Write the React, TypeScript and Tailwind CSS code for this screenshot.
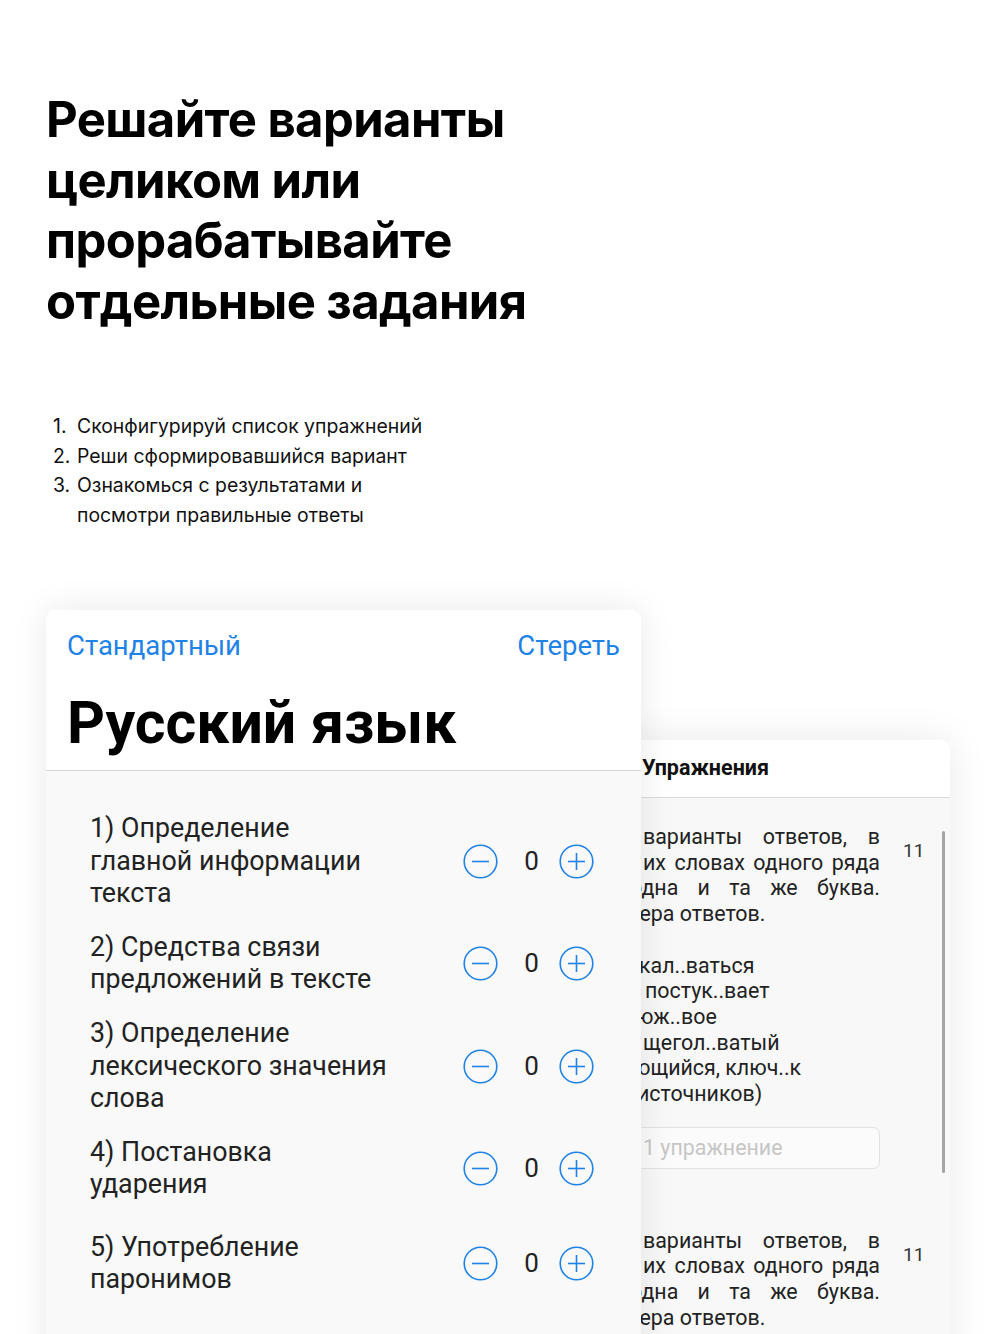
import React from "react";

function MinusIcon() {
  return (
    <svg width="35" height="35" viewBox="0 0 35 35" fill="none">
      <circle cx="17.5" cy="17.5" r="16.3" stroke="#1f82e6" strokeWidth="1.6" />
      <line x1="9" y1="17.5" x2="26" y2="17.5" stroke="#1f82e6" strokeWidth="1.6" />
    </svg>
  );
}

function PlusIcon() {
  return (
    <svg width="35" height="35" viewBox="0 0 35 35" fill="none">
      <circle cx="17.5" cy="17.5" r="16.3" stroke="#1f82e6" strokeWidth="1.6" />
      <line x1="9" y1="17.5" x2="26" y2="17.5" stroke="#1f82e6" strokeWidth="1.6" />
      <line x1="17.5" y1="9" x2="17.5" y2="26" stroke="#1f82e6" strokeWidth="1.6" />
    </svg>
  );
}

type Row = { lines: string[]; h: string };

const rows: Row[] = [
  { lines: ["1) Определение", "главной информации", "текста"], h: "h-[100px]" },
  { lines: ["2) Средства связи", "предложений в тексте"], h: "h-[104px]" },
  { lines: ["3) Определение", "лексического значения", "слова"], h: "h-[102px]" },
  { lines: ["4) Постановка", "ударения"], h: "h-[102px]" },
  { lines: ["5) Употребление", "паронимов"], h: "h-[88px]" },
];

function Justified({ words, cls }: { words: string[]; cls: string }) {
  return (
    <div className={"flex justify-between whitespace-nowrap " + cls}>
      {words.map((w, i) => (
        <span key={i}>{w}</span>
      ))}
    </div>
  );
}

function TaskText() {
  return (
    <div className="w-[250px]">
      <Justified words={["варианты", "ответов,", "в"]} cls="ml-[13px]" />
      <Justified words={["их", "словах", "одного", "ряда"]} cls="ml-[13px]" />
      <Justified words={["одна", "и", "та", "же", "буква."]} cls="ml-[0px]" />
      <div className="whitespace-nowrap ml-[-31px]">номера ответов.</div>
    </div>
  );
}

export default function App() {
  return (
    <div className="w-[1000px] h-[1334px] overflow-hidden bg-white font-[Inter] text-black">
      <h1 className="pl-[46px] pt-[90px] text-[49px] leading-[60.5px] font-bold tracking-[-0.6px]">
        Решайте варианты
        <br />
        целиком или
        <br />
        прорабатывайте
        <br />
        отдельные задания
      </h1>

      <ol className="mt-[80px] pl-[53px] text-[19.4px] leading-[29.5px] text-[#111] tracking-[0px]">
        <li className="flex">
          <span className="w-[24px]">1.</span>
          <span>Сконфигурируй список упражнений</span>
        </li>
        <li className="flex">
          <span className="w-[24px]">2.</span>
          <span>Реши сформировавшийся вариант</span>
        </li>
        <li className="flex">
          <span className="w-[24px]">3.</span>
          <span>
            Ознакомься с результатами и
            <br />
            посмотри правильные ответы
          </span>
        </li>
      </ol>

      <div className="relative mt-[80px] h-[725px]">
        {/* Right panel (behind) */}
        <div className="absolute left-[560px] top-[130px] w-[390px] h-[620px] z-0 rounded-tr-[10px] shadow-[0_0_40px_rgba(0,0,0,0.09)] font-[Roboto]">
          <div className="h-[58px] bg-white rounded-tr-[10px] border-b border-[#dadada] flex items-center pl-[82px]">
            <span className="text-[21.5px] font-bold text-[#111]">Упражнения</span>
          </div>
          <div className="relative bg-[#f8f8f8] h-[562px] text-[21.4px] leading-[25.7px] text-[#222]">
            <div className="flex">
              <div className="pl-[70px] pt-[26px] w-[320px]">
                <TaskText />
                <div className="h-[25.7px]" />
                <div className="whitespace-nowrap ml-[9px]">кал..ваться</div>
                <div className="whitespace-nowrap ml-[15px]">постук..вает</div>
                <div className="whitespace-nowrap ml-[6px]">юж..вое</div>
                <div className="whitespace-nowrap ml-[13px]">щегол..ватый</div>
                <div className="whitespace-nowrap ml-[3px]">ющийся, ключ..к</div>
                <div className="whitespace-nowrap ml-[7px]">источников)</div>
                <div className="mt-[20px] ml-[-30px] w-[280px] h-[42px] rounded-[7px] border border-[#e3e3e3] bg-[#fbfbfb] flex items-center pl-[42px] text-[#c6c6c6]">
                  1 упражнение
                </div>
              </div>
              <div className="pt-[40px] pl-[23px] text-[19px] text-[#333]">11</div>
            </div>
            <div className="flex mt-[59px]">
              <div className="pl-[70px] w-[320px]">
                <TaskText />
              </div>
              <div className="pt-[14px] pl-[23px] text-[19px] text-[#333]">11</div>
            </div>
            <div className="absolute left-[382px] top-[33px] w-[3px] h-[342px] rounded-full bg-[#a5a5a5]" />
          </div>
        </div>

        {/* Left card */}
        <div className="relative z-10 ml-[46px] w-[595px] h-[760px] rounded-t-[10px] shadow-[0_0_36px_rgba(0,0,0,0.09)] font-[Roboto]">
          <div className="h-[161px] bg-white rounded-t-[10px] border-b border-[#d6d6d6] px-[21px] pt-[20px]">
            <div className="flex justify-between text-[27.5px] leading-[32px] text-[#1f82e6]">
              <span>Стандартный</span>
              <span>Стереть</span>
            </div>
            <div className="mt-[26px] text-[59px] leading-[70px] font-bold text-black">Русский язык</div>
          </div>
          <div className="bg-[#f9f9f9] h-[600px] pt-[40px] pl-[44px] pr-[47px]">
            {rows.map((r, i) => (
              <div key={i} className={"flex items-center justify-between " + r.h}>
                <div className="text-[26.8px] leading-[32.5px] text-[#222]">
                  {r.lines.map((l, j) => (
                    <div key={j}>{l}</div>
                  ))}
                </div>
                <div className="flex items-center">
                  <MinusIcon />
                  <div className="w-[61px] pl-[6px] text-center text-[26px] text-[#222]">0</div>
                  <PlusIcon />
                </div>
              </div>
            ))}
          </div>
        </div>
      </div>
    </div>
  );
}
